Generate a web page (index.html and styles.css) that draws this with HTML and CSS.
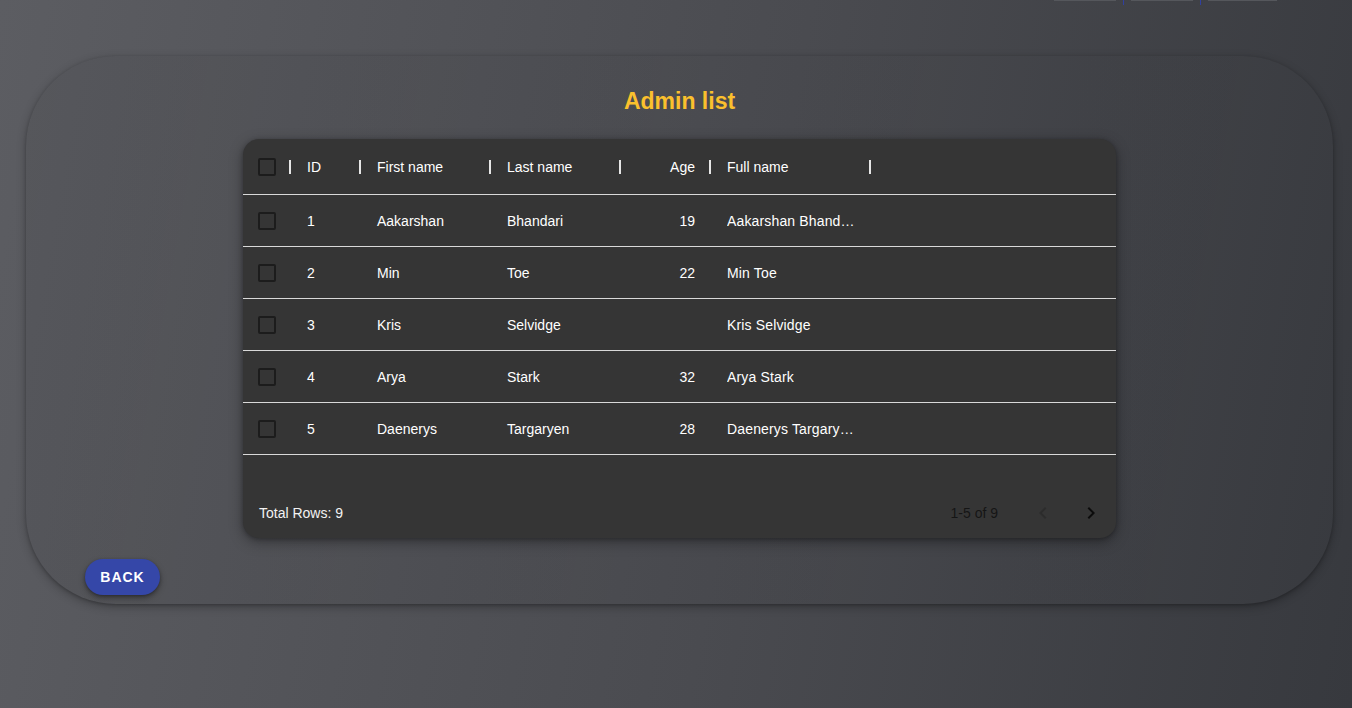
FILE: index.html
```html
<!DOCTYPE html>
<html>
<head>
<meta charset="utf-8">
<link rel="stylesheet" href="styles.css">
</head>
<body>
<div class="topbar">
  <span class="tb-btn w62"></span><span class="tb-sep"></span>
  <span class="tb-btn w62"></span><span class="tb-sep"></span>
  <span class="tb-btn w69"></span>
</div>
<main class="panel">
  <h2 class="title">Admin list</h2>
  <div class="grid">
    <div class="row head">
      <div class="c chk"><span class="box"></span></div>
      <div class="c id">ID</div>
      <div class="c fn">First name</div>
      <div class="c ln">Last name</div>
      <div class="c age">Age</div>
      <div class="c full">Full name</div>
    </div>
    <div class="row">
      <div class="c chk"><span class="box"></span></div>
      <div class="c id">1</div>
      <div class="c fn">Aakarshan</div>
      <div class="c ln">Bhandari</div>
      <div class="c age">19</div>
      <div class="c full"><span class="trunc">Aakarshan Bhandari</span></div>
    </div>
    <div class="row">
      <div class="c chk"><span class="box"></span></div>
      <div class="c id">2</div>
      <div class="c fn">Min</div>
      <div class="c ln">Toe</div>
      <div class="c age">22</div>
      <div class="c full"><span class="trunc">Min Toe</span></div>
    </div>
    <div class="row">
      <div class="c chk"><span class="box"></span></div>
      <div class="c id">3</div>
      <div class="c fn">Kris</div>
      <div class="c ln">Selvidge</div>
      <div class="c age"></div>
      <div class="c full"><span class="trunc">Kris Selvidge</span></div>
    </div>
    <div class="row">
      <div class="c chk"><span class="box"></span></div>
      <div class="c id">4</div>
      <div class="c fn">Arya</div>
      <div class="c ln">Stark</div>
      <div class="c age">32</div>
      <div class="c full"><span class="trunc">Arya Stark</span></div>
    </div>
    <div class="row">
      <div class="c chk"><span class="box"></span></div>
      <div class="c id">5</div>
      <div class="c fn">Daenerys</div>
      <div class="c ln">Targaryen</div>
      <div class="c age">28</div>
      <div class="c full"><span class="trunc">Daenerys Targaryen</span></div>
    </div>
    <div class="spacer"></div>
    <div class="footer">
      <span class="total">Total Rows: 9</span>
      <div class="pager">
        <span class="shown">1-5 of 9</span>
        <span class="pbtn dis"><svg viewBox="0 0 24 24" width="24" height="24"><path d="M15.41 16.59 10.83 12l4.58-4.59L14 6l-6 6 6 6z"/></svg></span>
        <span class="pbtn"><svg viewBox="0 0 24 24" width="24" height="24"><path d="M8.59 16.59 13.17 12 8.59 7.41 10 6l6 6-6 6z"/></svg></span>
      </div>
    </div>
  </div>
  <button class="back">BACK</button>
</main>
</body>
</html>
```
FILE: styles.css
```css
html, body { height: 100%; }
body {
  margin: 0;
  background: linear-gradient(100deg, #5c5d62 0%, #4a4b50 55%, #37393e 100%);
  font-family: "Liberation Sans", Arial, sans-serif;
  color: #fff;
  overflow: hidden;
}
.topbar {
  display: flex;
  justify-content: flex-end;
  align-items: flex-start;
  height: 5px;
  padding-right: 75px;
}
.tb-btn {
  display: block;
  height: 1px;
  background: #55575c;
}
.w62 { width: 62px; }
.w69 { width: 69px; }
.tb-sep {
  display: block;
  width: 1px;
  height: 5px;
  background: #3040a0;
  margin: 0 7px;
}
.panel {
  margin: 51px 0 0 26px;
  width: 1307px;
  height: 548px;
  box-sizing: border-box;
  border-radius: 90px;
  background: linear-gradient(100deg, rgba(0,0,0,0.06), rgba(0,0,0,0.0));
  box-shadow: 0 3px 10px rgba(0,0,0,0.28), 0 1px 3px rgba(0,0,0,0.2);
  padding: 29px 0 9px 59px;
  display: flex;
  flex-direction: column;
}
.title {
  margin: 0 0 22px -59px;
  font-size: 23px;
  line-height: 32px;
  font-weight: 700;
  color: #fbc02d;
  text-align: center;
}
.grid {
  align-self: flex-start;
  margin-left: 158px;
  width: 873px;
  height: 399px;
  box-sizing: border-box;
  background: #353535;
  border-radius: 16px;
  box-shadow: 0 4px 14px rgba(0,0,0,0.35), 0 1px 4px rgba(0,0,0,0.25);
  display: flex;
  flex-direction: column;
  overflow: hidden;
  font-size: 14px;
}
.row {
  display: flex;
  height: 51px;
  border-bottom: 1px solid #d9d9d9;
  flex-shrink: 0;
}
.row.head { height: 55px; }
.c {
  position: relative;
  display: flex;
  align-items: center;
  box-sizing: border-box;
  padding: 0 16px;
  white-space: nowrap;
  overflow: hidden;
}
.head .c::after {
  content: "";
  position: absolute;
  right: 0;
  top: 21px;
  width: 2px;
  height: 14px;
  background: #e6e6e6;
}
.chk { width: 48px; padding: 0; justify-content: center; }
.id { width: 70px; }
.fn { width: 130px; }
.ln { width: 130px; }
.age { width: 90px; justify-content: flex-end; }
.full { width: 160px; }
.trunc {
  display: block;
  overflow: hidden;
  text-overflow: ellipsis;
  white-space: nowrap;
  max-width: 100%;
  letter-spacing: 0.15px;
}
.box {
  display: block;
  width: 14px;
  height: 14px;
  border: 2px solid #1c1c1c;
  border-radius: 2px;
}
.spacer { flex: 1; }
.footer {
  display: flex;
  align-items: center;
  justify-content: space-between;
  height: 52px;
  padding: 2px 5px 0 16px;
  box-sizing: border-box;
  flex-shrink: 0;
}
.total { color: #f2f2f2; }
.pager { display: flex; align-items: center; }
.shown { color: #151515; margin-right: 17px; }
.pbtn {
  width: 40px;
  height: 40px;
  display: flex;
  align-items: center;
  justify-content: center;
  margin-left: 8px;
}
.pbtn:first-of-type { margin-left: 0; }
.pbtn svg { fill: #0c0c0c; }
.pbtn.dis svg { fill: #2c2c2c; }
.back {
  align-self: flex-start;
  margin-top: 21px;
  width: 75px;
  height: 36px;
  border: none;
  border-radius: 18px;
  background: #3547a8;
  color: #fff;
  font-family: "Liberation Sans", Arial, sans-serif;
  font-weight: 700;
  font-size: 14px;
  letter-spacing: 1px;
  box-shadow: 0 3px 6px rgba(0,0,0,0.35), 0 1px 3px rgba(0,0,0,0.25);
  padding: 0;
}
```
